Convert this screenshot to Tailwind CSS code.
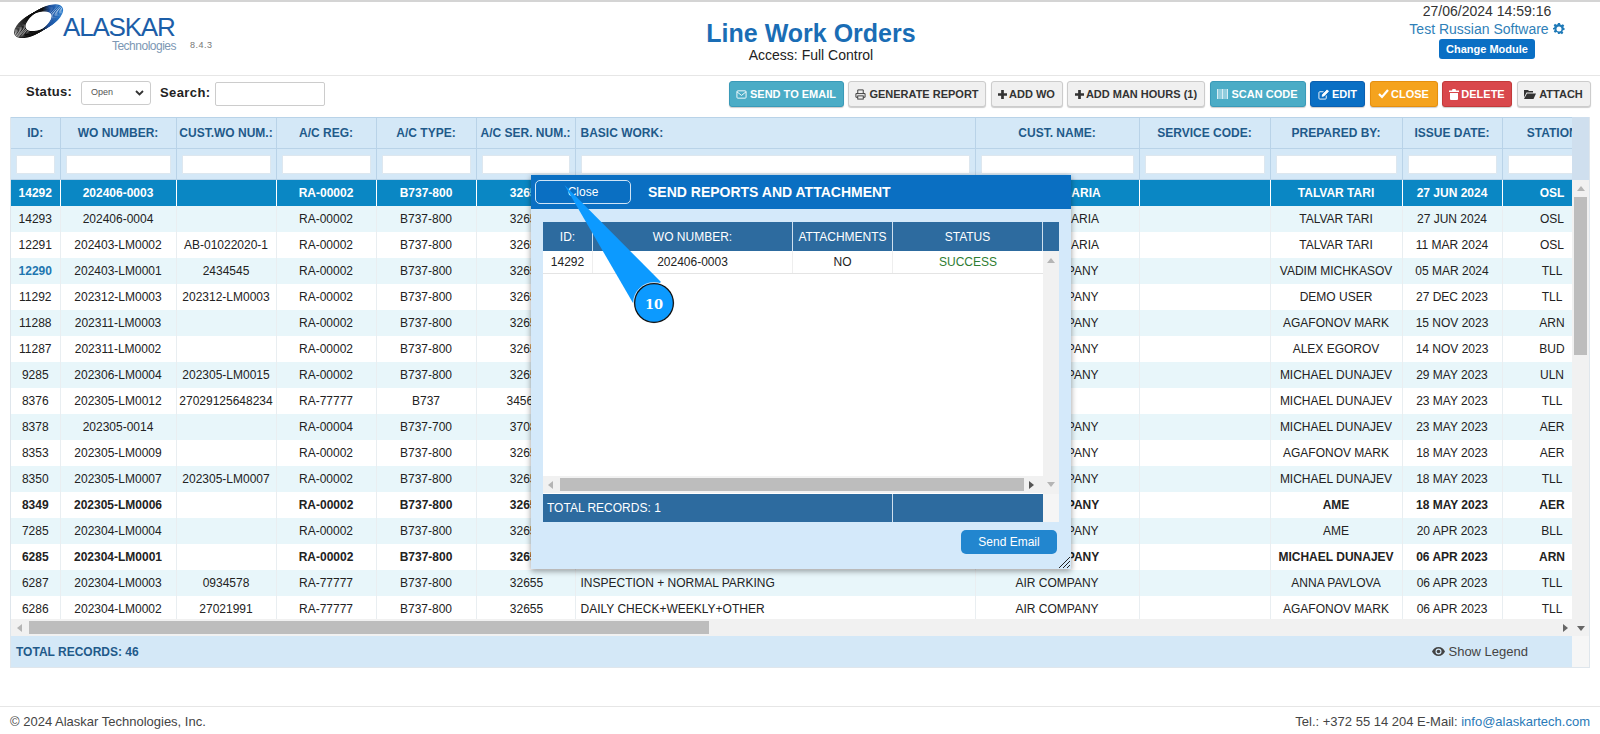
<!DOCTYPE html>
<html lang="en">
  <head>
    <meta charset="UTF-8" />
    <title>Line Work Orders</title>
    <script src="https://cdn.jsdelivr.net/npm/@tailwindcss/browser@4"></script>
  </head>

  <body class="bg-white font-['Liberation_Sans',Arial,sans-serif] text-[12px] text-[#333] h-[734px] w-[1600px] overflow-hidden relative">
    <!-- top header -->
    <header class="h-[76px] border-t-2 border-b border-t-[#d4d4d4] border-b-[#e6e6e6] flex relative">
      <div class="w-[530px] pl-[12px] pt-[2px] flex items-start">
        <svg width="55" height="34" viewBox="0 0 55 34" class="shrink-0">
          <defs>
            <linearGradient id="ring" gradientUnits="userSpaceOnUse" x1="4" y1="4" x2="46" y2="32">
              <stop offset="0" stop-color="#555" />
              <stop offset="0.3" stop-color="#0c0c0c" />
              <stop offset="0.58" stop-color="#111" />
              <stop offset="0.72" stop-color="#1b4f9e" />
              <stop offset="1" stop-color="#2a7fd0" />
            </linearGradient>
          </defs>
          <g fill="none" stroke="url(#ring)" stroke-width="1.100" transform="rotate(-30 27 17)">
            <ellipse cx="20.500" cy="17" rx="21" ry="9.500" />
            <ellipse cx="22" cy="17" rx="21" ry="9.500" />
            <ellipse cx="23.500" cy="17" rx="21" ry="9.500" />
            <ellipse cx="25" cy="17" rx="21" ry="9.500" />
            <ellipse cx="26.500" cy="17" rx="21" ry="9.500" />
            <ellipse cx="28" cy="17" rx="21" ry="9.500" />
            <ellipse cx="29.500" cy="17" rx="21" ry="9.500" />
            <ellipse cx="31" cy="17" rx="21" ry="9.500" />
            <ellipse cx="32.500" cy="17" rx="21" ry="9.500" />
          </g>
        </svg>
        <div class="ml-[-4px] mt-[11px] w-[113px] text-right">
          <div class="text-[#1c5ea8] text-[26px] leading-[24px] tracking-[-1.200px] text-left whitespace-nowrap">ALASKAR</div>
          <div class="text-[#7c97b4] text-[12px] leading-[13px] tracking-[-0.5px] mt-[1px]">Technologies</div>
        </div>
        <span class="text-[#777] text-[9px] leading-[10px] mt-[36px] ml-[14px] tracking-[0.5px]">8.4.3</span>
      </div>
      <div class="absolute left-[511px] w-[600px] top-[17px] text-center">
        <h1 class="text-[25px] leading-[28px] font-bold text-[#1a6db5]">Line Work Orders</h1>
        <div class="text-[14px] leading-[16px] text-[#222]">Access: Full Control</div>
      </div>
      <div class="absolute left-[1380px] w-[214px] top-0 text-center">
        <div class="text-[14px] leading-[18px] text-[#333]">27/06/2024 14:59:16</div>
        <div class="text-[14px] leading-[18px] text-[#2f7fb8] flex items-center justify-center gap-[4px]">
          Test Russian Software
          <svg width="12" height="12" viewBox="0 0 24 24" fill="#1f7ab8"><path d="M10 1h4l.7 3.2 2.2.9 2.8-1.8 2.8 2.8-1.8 2.8.9 2.2L23 11v4l-3.2.7-.9 2.2 1.8 2.8-2.8 2.8-2.8-1.8-2.2.9L14 23h-4l-.7-3.2-2.2-.9-2.8 1.8-2.8-2.8 1.8-2.8-.9-2.2L-1 15v-4l3.2-.7.9-2.2L1.3 5.300l2.800-2.800 2.800 1.800 2.200-.9zM12 8a5 5 0 100 10 5 5 0 000-10z" fill-rule="evenodd" transform="translate(0 -1)" /></svg>
        </div>
        <button class="w-[96px] h-[20px] mt-[1px] rounded-[3px] bg-[#0a6fc4] text-white font-bold text-[11px]">Change Module</button>
      </div>
    </header>

    <!-- toolbar -->
    <div class="h-[41px] pb-[7px] flex items-center relative">
      <label class="ml-[26px] w-[55px] font-bold text-[13px] tracking-[0.3px] text-[#222] mt-[-3px]">Status:</label>
      <div class="w-[70px] h-[24px] border border-[#ccc] rounded-[3px] flex items-center justify-between pl-[9px] pr-[6px] text-[9px] text-[#555]">
        Open
        <svg width="9" height="6" viewBox="0 0 9 6"><path d="M1 1l3.500 3.500L8 1" fill="none" stroke="#333" stroke-width="1.800" /></svg>
      </div>
      <label class="ml-[9px] w-[55px] font-bold text-[13px] tracking-[0.4px] text-[#222] mt-[-1px]">Search:</label>
      <input class="w-[110px] h-[24px] mt-[1px] border border-[#ccc] rounded-[2px]" />
      <div class="absolute left-[728.500px] top-[5px] flex gap-[4.500px] text-[11px] leading-none">
        <button class="w-[115px] h-[26px] rounded-[3px] border border-[#3a9ab8] bg-[#4bacc6] text-white font-bold flex items-center justify-center gap-[3px] shadow-[0_1px_1px_rgba(0,0,0,0.2)]">
          <svg width="11" height="11" viewBox="0 0 12 12" fill="none" stroke="#fff"><rect x="1" y="2" width="10" height="8" rx="1" /><path d="M1 3l5 4 5-4" /></svg>
          SEND TO EMAIL
        </button>
        <button class="w-[138px] h-[26px] rounded-[3px] border border-[#ccc] bg-[#f0f0f0] text-[#333] font-bold flex items-center justify-center gap-[3px] shadow-[0_1px_1px_rgba(0,0,0,0.2)]">
          <svg width="11" height="11" viewBox="0 0 12 12" fill="none" stroke="#333"><path d="M3 5V1h6v4M3 9H1V5h10v4H9" /><rect x="3" y="7.500" width="6" height="3.500" /></svg>
          GENERATE REPORT
        </button>
        <button class="w-[72px] h-[26px] rounded-[3px] border border-[#ccc] bg-[#f0f0f0] text-[#333] font-bold flex items-center justify-center gap-[2px] shadow-[0_1px_1px_rgba(0,0,0,0.2)]">
          <svg width="9" height="9" viewBox="0 0 10 10" fill="#333"><path d="M3.500 0h3v3.500H10v3H6.500V10h-3V6.500H0v-3h3.500z" /></svg>
          ADD WO
        </button>
        <button class="w-[138px] h-[26px] rounded-[3px] border border-[#ccc] bg-[#f0f0f0] text-[#333] font-bold flex items-center justify-center gap-[2px] shadow-[0_1px_1px_rgba(0,0,0,0.2)]">
          <svg width="9" height="9" viewBox="0 0 10 10" fill="#333"><path d="M3.500 0h3v3.500H10v3H6.500V10h-3V6.500H0v-3h3.500z" /></svg>
          ADD MAN HOURS (1)
        </button>
        <button class="w-[96px] h-[26px] rounded-[3px] border border-[#3a9ab8] bg-[#4bacc6] text-white font-bold flex items-center justify-center gap-[3px] shadow-[0_1px_1px_rgba(0,0,0,0.2)]">
          <svg width="11" height="10" viewBox="0 0 11 10" fill="#d8eef5"><path d="M0 0h1.500v10H0zM2.500 0h1v10h-1zM4.500 0h2v10h-2zM7.500 0h1v10h-1zM9.500 0h1.500v10H9.500z" /></svg>
          SCAN CODE
        </button>
        <button class="w-[55px] h-[26px] rounded-[3px] border border-[#0a5fb0] bg-[#0a6fc4] text-white font-bold flex items-center justify-center gap-[3px] shadow-[0_1px_1px_rgba(0,0,0,0.2)]">
          <svg width="11" height="11" viewBox="0 0 12 12" fill="none" stroke="#fff"><path d="M9 7v3a1 1 0 01-1 1H2a1 1 0 01-1-1V4a1 1 0 011-1h4" /><path d="M4.500 8l.5-2 5-5 1.500 1.500-5 5z" fill="#fff" /></svg>
          EDIT
        </button>
        <button class="w-[68px] h-[26px] rounded-[3px] border border-[#e58f0f] bg-[#f5a31e] text-white font-bold flex items-center justify-center gap-[2px] shadow-[0_1px_1px_rgba(0,0,0,0.2)]">
          <svg width="11" height="10" viewBox="0 0 11 10" fill="none" stroke="#fff" stroke-width="2.200"><path d="M1 5l3 3 6-7" /></svg>
          CLOSE
        </button>
        <button class="w-[70px] h-[26px] rounded-[3px] border border-[#c23a3a] bg-[#d9484c] text-white font-bold flex items-center justify-center gap-[2px] shadow-[0_1px_1px_rgba(0,0,0,0.2)]">
          <svg width="10" height="11" viewBox="0 0 10 11" fill="#fff"><path d="M3.500 0h3l.5 1.500h3V3H0V1.500h3zM1 4h8v6a1 1 0 01-1 1H2a1 1 0 01-1-1z" /></svg>
          DELETE
        </button>
        <button class="w-[74px] h-[26px] rounded-[3px] border border-[#ccc] bg-[#f0f0f0] text-[#333] font-bold flex items-center justify-center gap-[3px] shadow-[0_1px_1px_rgba(0,0,0,0.2)]">
          <svg width="12" height="10" viewBox="0 0 12 10" fill="#333"><path d="M0 1h4l1 1h4v1.500H2.500L0 8.500zM3 4.500h9L9.500 10H0z" /></svg>
          ATTACH
        </button>
      </div>
    </div>

    <!-- main grid -->
    <section class="ml-[10px] w-[1580px] border-x border-b border-[#dfe6ec]">
      <div class="flex">
        <div class="w-[1561px] overflow-hidden">
          <table class="table-fixed w-[1591px] border-collapse text-[12px]">
            <colgroup>
              <col class="w-[49px]" /><col class="w-[116px]" /><col class="w-[100px]" /><col class="w-[100px]" /><col class="w-[100px]" /><col class="w-[99px]" /><col class="w-[400px]" /><col class="w-[164px]" /><col class="w-[131px]" /><col class="w-[132px]" /><col class="w-[100px]" /><col class="w-[100px]" />
            </colgroup>
            <thead class="bg-[#d4e8f7] text-[#1f5a8a]">
              <tr class="h-[31px] border-y border-[#b9d3e8]">
                <th class="font-bold border-r border-[#b9d3e8]">ID:</th>
                <th class="font-bold border-r border-[#b9d3e8]">WO NUMBER:</th>
                <th class="font-bold border-r border-[#b9d3e8] whitespace-nowrap">CUST.WO NUM.:</th>
                <th class="font-bold border-r border-[#b9d3e8]">A/C REG:</th>
                <th class="font-bold border-r border-[#b9d3e8]">A/C TYPE:</th>
                <th class="font-bold border-r border-[#b9d3e8] whitespace-nowrap">A/C SER. NUM.:</th>
                <th class="font-bold border-r border-[#b9d3e8] text-left pl-[5px]">BASIC WORK:</th>
                <th class="font-bold border-r border-[#b9d3e8]">CUST. NAME:</th>
                <th class="font-bold border-r border-[#b9d3e8]">SERVICE CODE:</th>
                <th class="font-bold border-r border-[#b9d3e8]">PREPARED BY:</th>
                <th class="font-bold border-r border-[#b9d3e8]">ISSUE DATE:</th>
                <th class="font-bold whitespace-nowrap pl-[4px]">STATION:</th>
              </tr>
              <tr id="filters" class="h-[31px] border-b border-[#b9d3e8]"></tr>
            </thead>
          </table>
        </div>
        <div class="flex-1 bg-[#cfdfee]"></div>
      </div>
      <div class="flex h-[439px]">
        <div class="w-[1561px] overflow-hidden">
          <table class="table-fixed w-[1591px] border-collapse text-[12px]">
            <colgroup>
              <col class="w-[49px]" /><col class="w-[116px]" /><col class="w-[100px]" /><col class="w-[100px]" /><col class="w-[100px]" /><col class="w-[99px]" /><col class="w-[400px]" /><col class="w-[164px]" /><col class="w-[131px]" /><col class="w-[132px]" /><col class="w-[100px]" /><col class="w-[100px]" />
            </colgroup>
            <tbody id="rows"></tbody>
          </table>
        </div>
        <!-- vertical scrollbar -->
        <div class="flex-1 bg-[#f1f1f1] relative">
          <span class="absolute left-[5px] top-[6px] border-x-[4px] border-x-transparent border-b-[5px] border-b-[#b5b5b5]"></span>
          <div class="absolute left-[2px] right-[2px] top-[17px] h-[158px] bg-[#bdbdbd]"></div>
        </div>
      </div>
      <!-- horizontal scrollbar -->
      <div class="h-[17px] bg-[#f1f1f1] flex items-center relative">
        <span class="absolute left-[6px] top-[5px] border-y-[4px] border-y-transparent border-r-[5px] border-r-[#b5b5b5]"></span>
        <div class="ml-[18px] w-[680px] h-[13px] bg-[#bdbdbd]"></div>
        <span class="absolute left-[1552px] top-[5px] border-y-[4px] border-y-transparent border-l-[5px] border-l-[#666]"></span>
        <span class="absolute left-[1566px] top-[7px] border-x-[4px] border-x-transparent border-t-[5px] border-t-[#666]"></span>
      </div>
      <div class="h-[31px] flex">
        <div class="w-[1561px] bg-[#d4e8f7] flex items-center justify-between pl-[5px] pr-[44px]">
          <span class="font-bold text-[#1f5a8a]">TOTAL RECORDS: 46</span>
          <span class="flex items-center gap-[3px] text-[#444] text-[13px]">
            <svg width="13" height="9" viewBox="0 0 13 9" fill="#444"><path fill-rule="evenodd" d="M6.500 0C9.500 0 11.800 2 13 4.500 11.800 7 9.500 9 6.500 9S1.200 7 0 4.500C1.200 2 3.500 0 6.500 0zm0 1.500a3 3 0 100 6 3 3 0 000-6z" /><circle cx="6.500" cy="4.500" r="1.800" /></svg>
            Show Legend
          </span>
        </div>
        <div class="flex-1 bg-[#f6f6f6]"></div>
      </div>
    </section>

    <!-- footer -->
    <footer class="absolute left-0 right-0 top-[706px] h-[28px] pt-[3px] border-t border-[#e6e6e6] flex items-center justify-between px-[10px] text-[13px] text-[#444]">
      <span>© 2024 Alaskar Technologies, Inc.</span>
      <span>Tel.: +372 55 14 204 E-Mail: <a class="text-[#2a7ab8]">info@alaskartech.com</a></span>
    </footer>

    <!-- send dialog -->
    <div class="absolute left-[531px] top-[175px] w-[540px] h-[394px] bg-[#d4e9fa] shadow-[0_2px_6px_rgba(0,0,0,0.4)]">
      <div class="h-[34px] bg-[#0a6fc2] flex items-center pl-[4px]">
        <button class="w-[96px] h-[24px] border border-[#cfe4f6] rounded-[5px] text-white text-[12px]">Close</button>
        <span class="ml-[17px] text-white font-bold text-[14px]">SEND REPORTS AND ATTACHMENT</span>
      </div>
      <div class="ml-[12px] mt-[13px] w-[516px]">
        <div class="flex h-[29px] bg-[#2d6b9f] text-white">
          <div class="w-[50px] flex items-center justify-center border-r border-[#cfe0ee]">ID:</div>
          <div class="w-[200px] flex items-center justify-center border-r border-[#cfe0ee]">WO NUMBER:</div>
          <div class="w-[100px] flex items-center justify-center border-r border-[#cfe0ee]">ATTACHMENTS</div>
          <div class="w-[150px] flex items-center justify-center border-r border-[#cfe0ee]">STATUS</div>
        </div>
        <div class="flex h-[243px]">
          <div class="w-[500px] bg-white">
            <div class="flex h-[23px] border-b border-[#e4e4e4] text-[#222]">
              <div class="w-[50px] flex items-center justify-center border-r border-[#eee]">14292</div>
              <div class="w-[200px] flex items-center justify-center border-r border-[#eee]">202406-0003</div>
              <div class="w-[100px] flex items-center justify-center border-r border-[#eee]">NO</div>
              <div class="w-[150px] flex items-center justify-center text-[#2e7d32]">SUCCESS</div>
            </div>
            <div class="h-[202px]"></div>
            <div class="h-[17px] bg-[#f1f1f1] flex items-center relative">
              <span class="absolute left-[5px] top-[5px] border-y-[4px] border-y-transparent border-r-[5px] border-r-[#b5b5b5]"></span>
              <div class="ml-[17px] w-[464px] h-[13px] bg-[#bdbdbd]"></div>
              <span class="absolute left-[486px] top-[5px] border-y-[4px] border-y-transparent border-l-[5px] border-l-[#555]"></span>
            </div>
          </div>
          <div class="flex-1 bg-[#f1f1f1] relative">
            <span class="absolute left-[4px] top-[7px] border-x-[4px] border-x-transparent border-b-[5px] border-b-[#b5b5b5]"></span>
            <span class="absolute left-[4px] bottom-[7px] border-x-[4px] border-x-transparent border-t-[5px] border-t-[#b5b5b5]"></span>
          </div>
        </div>
        <div class="flex h-[28px]">
          <div class="w-[500px] bg-[#2d6b9f] text-white flex">
            <div class="w-[350px] flex items-center pl-[4px] border-r border-[#cfe0ee]">TOTAL RECORDS: 1</div>
          </div>
          <div class="flex-1 bg-[#f5f5f5]"></div>
        </div>
      </div>
      <button class="absolute left-[430px] top-[355px] w-[96px] h-[24px] rounded-[5px] bg-[#2286cf] text-white text-[12px]">Send Email</button>
      <svg class="absolute right-0 bottom-0" width="13" height="13" viewBox="0 0 13 13" stroke="#222" fill="none"><path d="M1 12L12 1M5 12l7-7M9 12l3-3" /></svg>
    </div>

    <!-- tutorial callout -->
    <svg class="absolute left-[550px] top-[180px] pointer-events-none" width="130" height="150" viewBox="0 0 130 150">
      <path d="M14.500 5L111 102L83 123z" fill="#0c9aff" />
      <circle cx="104" cy="123" r="19.500" fill="#0c9aff" stroke="#111" stroke-width="1.500" />
      <circle cx="104" cy="123" r="20.500" fill="none" stroke="#fff" stroke-width="0.700" />
      <text x="104" y="128.500" text-anchor="middle" fill="#fff" font-family="DejaVu Serif" font-weight="700" font-size="13">10</text>
    </svg>

    <script>
      const data = [
        ["14292","202406-0003","","RA-00002","B737-800","32655","","AIR BULGARIA","","TALVAR TARI","27 JUN 2024","OSL"],
        ["14293","202406-0004","","RA-00002","B737-800","32655","","AIR BULGARIA","","TALVAR TARI","27 JUN 2024","OSL"],
        ["12291","202403-LM0002","AB-01022020-1","RA-00002","B737-800","32655","","AIR BULGARIA","","TALVAR TARI","11 MAR 2024","OSL"],
        ["12290","202403-LM0001","2434545","RA-00002","B737-800","32655","","AIR COMPANY","","VADIM MICHKASOV","05 MAR 2024","TLL"],
        ["11292","202312-LM0003","202312-LM0003","RA-00002","B737-800","32655","","AIR COMPANY","","DEMO USER","27 DEC 2023","TLL"],
        ["11288","202311-LM0003","","RA-00002","B737-800","32655","","AIR COMPANY","","AGAFONOV MARK","15 NOV 2023","ARN"],
        ["11287","202311-LM0002","","RA-00002","B737-800","32655","","AIR COMPANY","","ALEX EGOROV","14 NOV 2023","BUD"],
        ["9285","202306-LM0004","202305-LM0015","RA-00002","B737-800","32655","","AIR COMPANY","","MICHAEL DUNAJEV","29 MAY 2023","ULN"],
        ["8376","202305-LM0012","27029125648234","RA-77777","B737","345678","","","","MICHAEL DUNAJEV","23 MAY 2023","TLL"],
        ["8378","202305-0014","","RA-00004","B737-700","37082","","AIR COMPANY","","MICHAEL DUNAJEV","23 MAY 2023","AER"],
        ["8353","202305-LM0009","","RA-00002","B737-800","32655","","AIR COMPANY","","AGAFONOV MARK","18 MAY 2023","AER"],
        ["8350","202305-LM0007","202305-LM0007","RA-00002","B737-800","32655","","AIR COMPANY","","MICHAEL DUNAJEV","18 MAY 2023","TLL"],
        ["8349","202305-LM0006","","RA-00002","B737-800","32655","","AIR COMPANY","","AME","18 MAY 2023","AER"],
        ["7285","202304-LM0004","","RA-00002","B737-800","32655","","AIR COMPANY","","AME","20 APR 2023","BLL"],
        ["6285","202304-LM0001","","RA-00002","B737-800","32655","","AIR COMPANY","","MICHAEL DUNAJEV","06 APR 2023","ARN"],
        ["6287","202304-LM0003","0934578","RA-77777","B737-800","32655","INSPECTION + NORMAL PARKING","AIR COMPANY","","ANNA PAVLOVA","06 APR 2023","TLL"],
        ["6286","202304-LM0002","27021991","RA-77777","B737-800","32655","DAILY CHECK+WEEKLY+OTHER","AIR COMPANY","","AGAFONOV MARK","06 APR 2023","TLL"],
      ];
      const boldIds = ["8349", "6285"];

      document.getElementById("filters").innerHTML = data[0]
        .map(
          () =>
            `<th class="border-r border-[#b9d3e8] px-[5px]"><input class="block w-full h-[19px] bg-white border border-[#dde7ef] rounded-[1px]" /></th>`,
        )
        .join("");

      document.getElementById("rows").innerHTML = data
        .map((row, i) => {
          let rowClass = i % 2 ? "bg-[#e8f6fa] text-[#222]" : "bg-white text-[#222]";
          if (i == 0) rowClass = "bg-[#0a87c4] text-white font-bold";
          if (boldIds.includes(row[0])) rowClass += " font-bold";
          const cells = row
            .map((text, c) => {
              let cls = "text-center border-r border-[#e9eef1] whitespace-nowrap overflow-hidden";
              if (i == 0) cls = "text-center border-r border-white whitespace-nowrap overflow-hidden";
              if (c == 5) cls += " pl-[2px]";
              if (c == 6) cls += " text-left pl-[5px]";
              if (row[0] == "12290" && c == 0) cls += " text-[#1f76b0] font-bold";
              return `<td class="${cls}">${text}</td>`;
            })
            .join("");
          return `<tr class="h-[26px] ${rowClass}">${cells}</tr>`;
        })
        .join("");
    </script>
  </body>
</html>
